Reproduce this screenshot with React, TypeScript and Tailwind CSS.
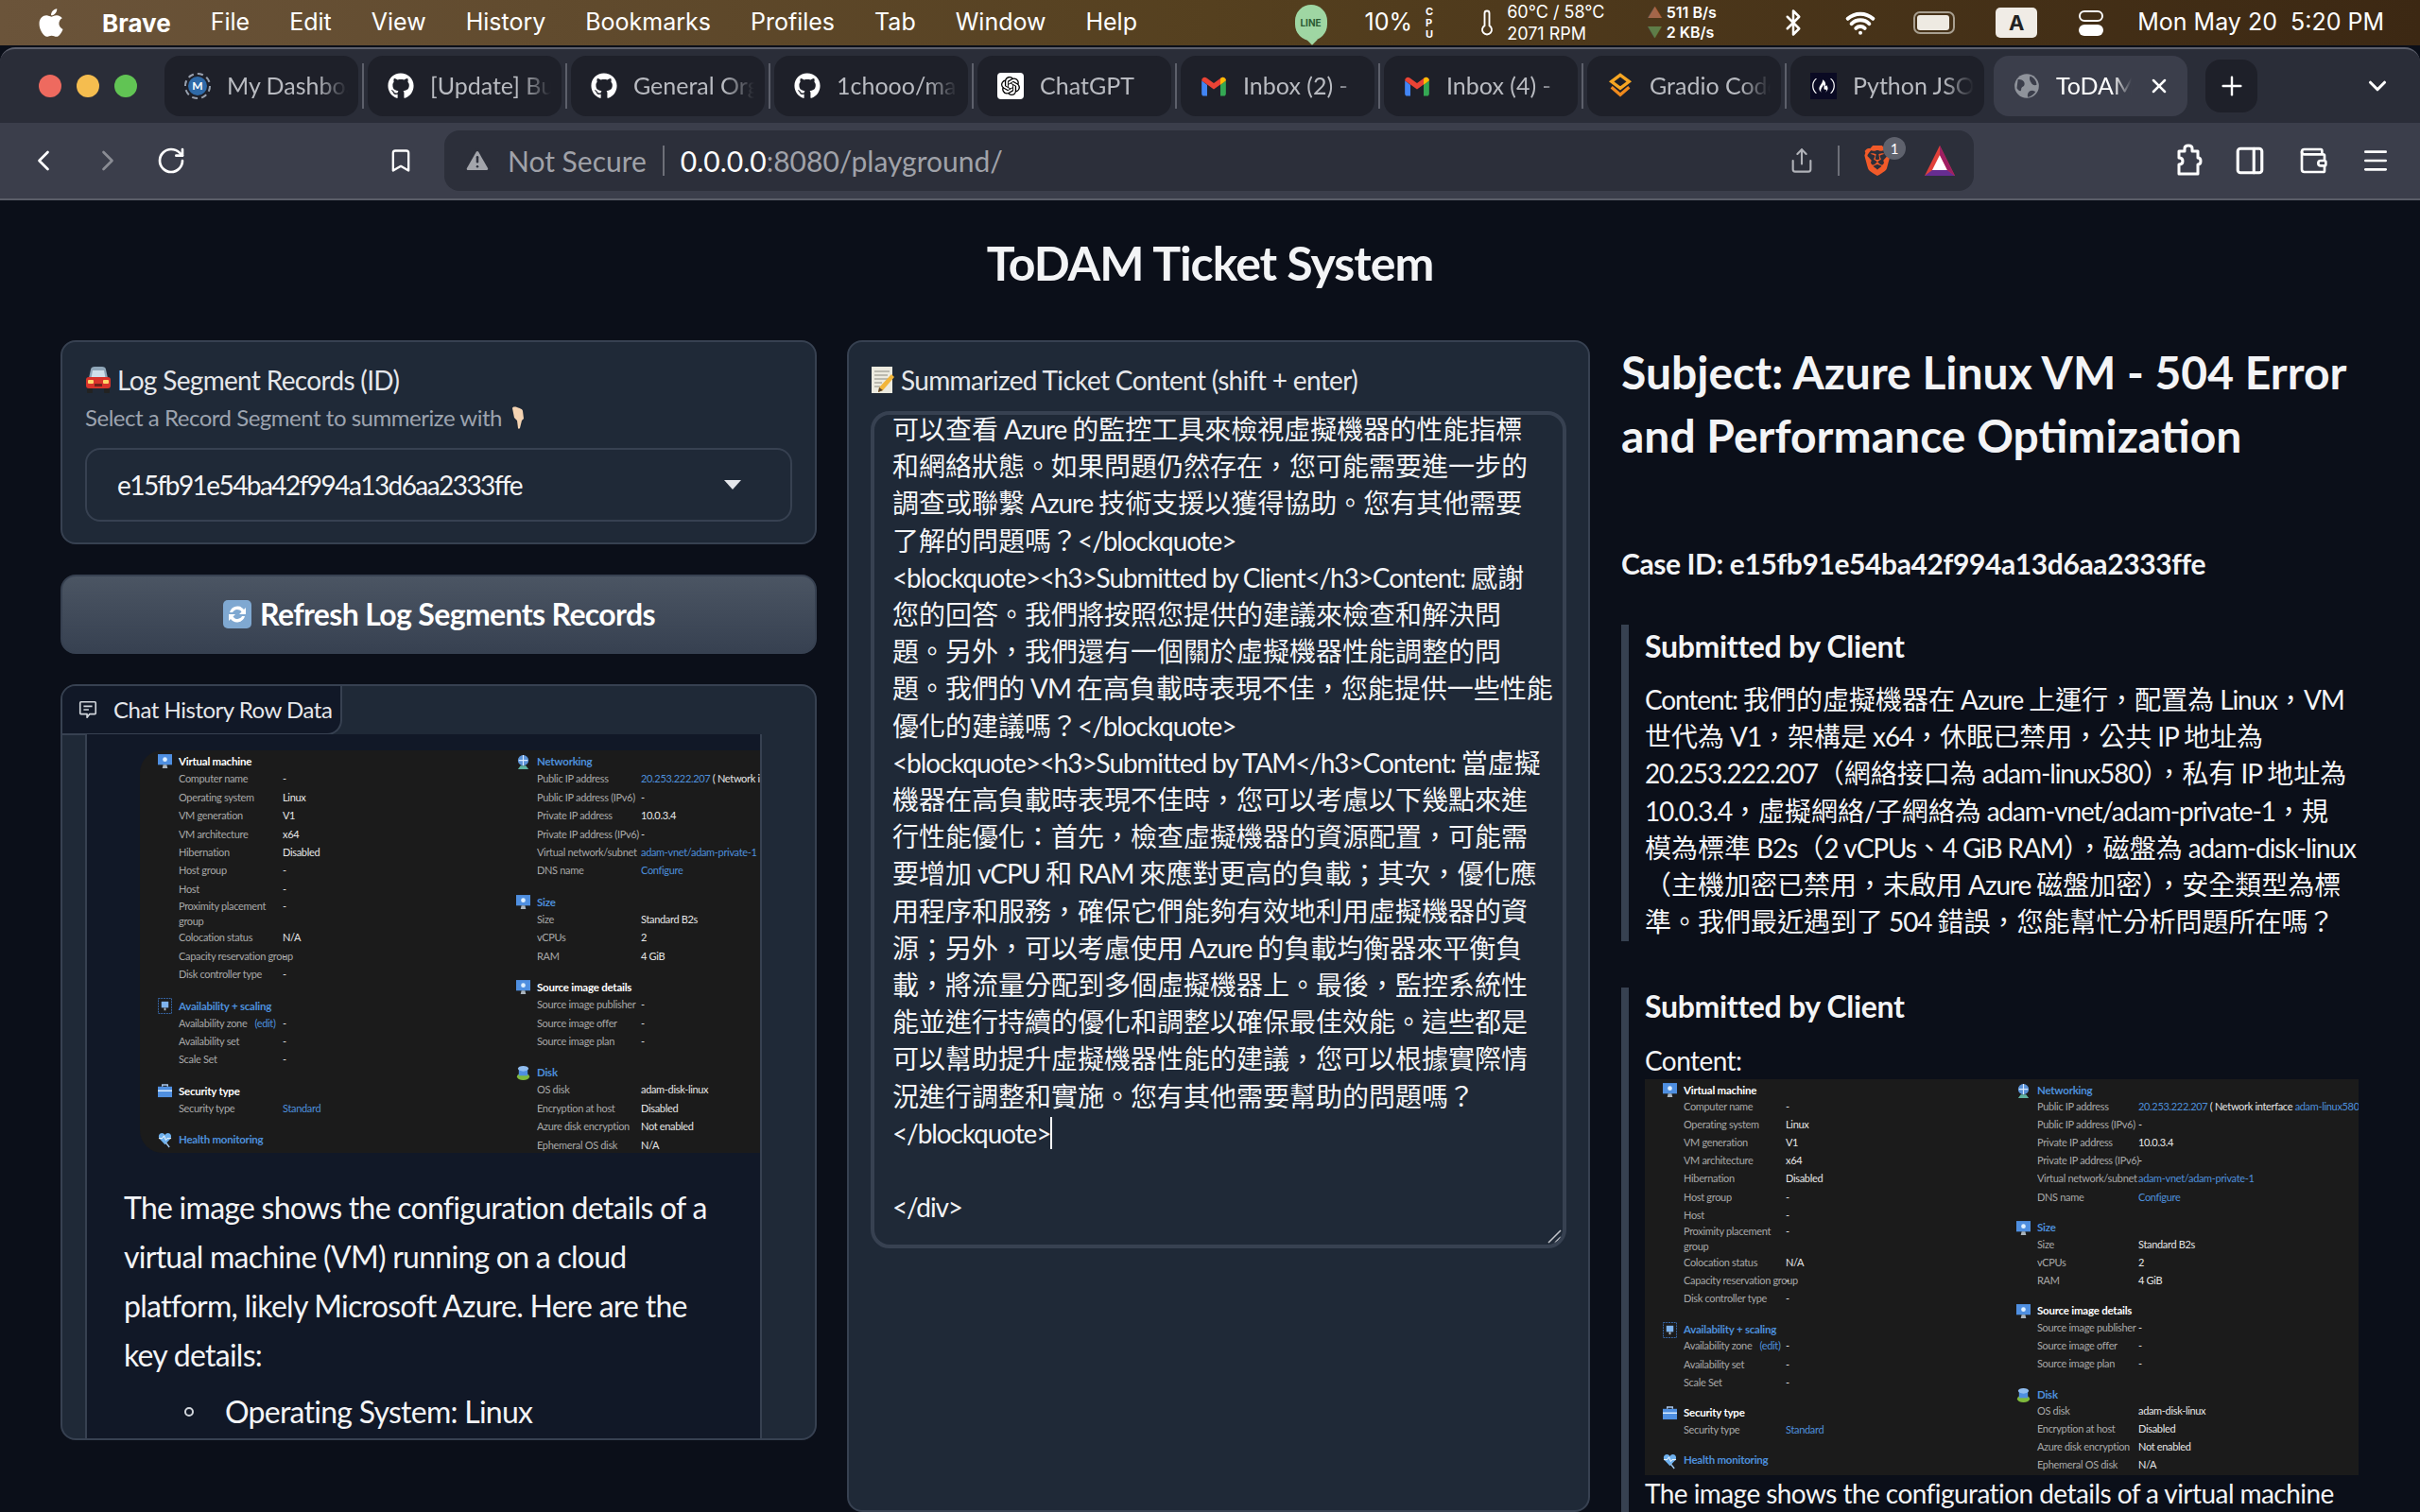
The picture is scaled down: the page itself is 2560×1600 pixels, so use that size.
import { Bluetooth, Bookmark, ChevronDown, ChevronLeft, ChevronRight, Menu, PanelRight, Plus, RotateCw, Share, Thermometer, TriangleAlert, Wallet, Wifi, X } from "lucide-react"
import { FaApple, FaFreeCodeCamp, FaGithub } from "react-icons/fa"
import { SiBrave, SiOpenai } from "react-icons/si"
import type { ReactNode } from "react"

const ui = "font-['Lato','Noto_Sans_CJK_TC',sans-serif]"

function GmailIcon() {
  return (
    <svg viewBox="0 0 24 18" className="w-7 h-6">
      <path d="M1 4v12c0 1 .6 2 2 2h3V8z" fill="#4285f4" />
      <path d="M18 8v10h3c1.4 0 2-1 2-2V4z" fill="#34a853" />
      <path d="M1 4l11 8 11-8c0-2.500-2.800-3.600-4.500-2.300L12 6.500 5.500 1.700C3.800.4 1 1.500 1 4z" fill="#ea4335" />
      <path d="M18 2.800V8l5-4c0-2.500-2.800-3.600-4.500-2.300z" fill="#fbbc04" />
    </svg>
  )
}

function GradioIcon() {
  return (
    <svg viewBox="0 0 24 24" className="w-7 h-7" fill="none" stroke="#f6a623" strokeWidth="2.800">
      <path d="M12 2l8 6-8 6-8-6z" />
      <path d="M4 13l8 7 8-7" stroke="#f08a1d" />
    </svg>
  )
}

function DashIcon() {
  return (
    <div className="w-7 h-7 rounded-full border-2 border-dashed border-gray-400 flex items-center justify-center">
      <div className="w-5 h-5 rounded-full bg-[#2f6aa8] text-white text-[12px] font-bold flex items-center justify-center">M</div>
    </div>
  )
}

function GlobeIcon() {
  return (
    <svg viewBox="0 0 24 24" className="w-7 h-7">
      <circle cx="12" cy="12" r="11" fill="#8f939b" />
      <path d="M4 6c3 0 6 1 6 4s-3 2-3 5-3 1-4-1zM15 3c3 1 6 4 6 8-2 1-4 0-5-2s-2-3-1-6zM13 22c-1-3 1-6 4-6 1 0 2 1 3 1-1 2-4 5-7 5z" fill="#3b3e4b" />
    </svg>
  )
}

function ExtensionIcon() {
  return (
    <svg viewBox="0 0 30 36" className="w-[30px] h-[36px] text-white" fill="none" stroke="currentColor" strokeWidth="3" strokeLinejoin="round">
      <path d="M4 8h6V5c0-4 8-4 8 0v3h6v7c4 0 4 7 0 7v10H4V22c3 0 4-2 4-3.500S7 15 4 15z" />
    </svg>
  )
}

const tabs: { title: string; icon: ReactNode; active?: boolean }[] = [
  { title: "My Dashboard", icon: <DashIcon /> },
  { title: "[Update] Bump", icon: <FaGithub className="w-7 h-7 text-white" /> },
  { title: "General Organi", icon: <FaGithub className="w-7 h-7 text-white" /> },
  { title: "1chooo/markdown", icon: <FaGithub className="w-7 h-7 text-white" /> },
  {
    title: "ChatGPT",
    icon: (
      <div className="w-7 h-7 rounded bg-white flex items-center justify-center">
        <SiOpenai className="w-5 h-5 text-black" />
      </div>
    ),
  },
  { title: "Inbox (2) -", icon: <GmailIcon /> },
  { title: "Inbox (4) -", icon: <GmailIcon /> },
  { title: "Gradio Code", icon: <GradioIcon /> },
  {
    title: "Python JSON",
    icon: (
      <div className="w-7 h-7 bg-[#0a0a23] flex items-center justify-center">
        <FaFreeCodeCamp className="w-6 h-6 text-white" />
      </div>
    ),
  },
  { title: "ToDAM Ticket", icon: <GlobeIcon />, active: true },
]

const menus = ["File", "Edit", "View", "History", "Bookmarks", "Profiles", "Tab", "Window", "Help"]

function MenuBar() {
  return (
    <header className="h-[48px] flex items-center bg-gradient-to-r from-[#6b543a] via-[#55401f] to-[#3c2813] text-white font-['Inter',sans-serif] text-[25px]">
      <FaApple className="w-[30px] h-[34px] ml-[39px] mr-[39px]" />
      <span className="font-bold text-[26px] mr-[42px]">Brave</span>
      <nav className="flex gap-[42px]">
        {menus.map((m) => (
          <span key={m}>{m}</span>
        ))}
      </nav>
      <div className="ml-auto flex items-center">
        <div className="relative w-[34px] h-[38px] rounded-full bg-[#9fd6a3] text-[#2c5a33] text-[10px] font-bold flex items-center justify-center mr-[40px]">
          LINE
          <span className="absolute bottom-[-3px] left-[14px] w-[8px] h-[8px] rotate-45 bg-[#9fd6a3]" />
        </div>
        <span className="text-[25px] mr-[14px]">10%</span>
        <span className="flex flex-col text-[11px] leading-[12px] font-bold mr-[42px]">
          <span>C</span>
          <span>P</span>
          <span>U</span>
        </span>
        <Thermometer className="w-[30px] h-[40px] mr-[6px]" strokeWidth={1.500} />
        <div className="flex flex-col text-[18px] leading-[23px] mr-[38px] w-[110px] whitespace-nowrap">
          <span>60°C / 58°C</span>
          <span>2071 RPM</span>
        </div>
        <div className="flex flex-col text-[16px] leading-[21px] font-semibold w-[80px] mr-[60px] whitespace-nowrap">
          <span><span className="text-[#a4664a] mr-[4px]">▲</span>511 B/s</span>
          <span><span className="text-[#5e7d48] mr-[4px]">▼</span>2 KB/s</span>
        </div>
        <Bluetooth className="w-[30px] h-[32px] mr-[38px]" />
        <Wifi className="w-[36px] h-[32px] mr-[38px]" strokeWidth={3} />
        <div className="w-[44px] h-[24px] rounded-[7px] border-2 border-[#a89f90] p-[2px] mr-[43px]">
          <div className="h-full w-[34px] rounded-[3px] bg-[#eeeae2]" />
        </div>
        <div className="w-[44px] h-[32px] rounded-[5px] bg-[#f0ece6] text-[#222] font-bold text-[22px] flex items-center justify-center mr-[44px]">A</div>
        <div className="flex flex-col gap-[3px] mr-[36px]">
          <div className="w-[26px] h-[12px] rounded-full border-2 border-white" />
          <div className="w-[26px] h-[12px] rounded-full bg-white" />
        </div>
        <span className="mr-[38px] whitespace-nowrap">Mon May 20&nbsp;&nbsp;5:20 PM</span>
      </div>
    </header>
  )
}

function TabStrip() {
  return (
    <div className="h-[80px] bg-[#2a2d38] flex items-center border-t-2 border-[#5c5f6b] rounded-t-[16px] mt-[2px]">
      <div className="flex gap-[16px] ml-[41px] mr-[29px]">
        <span className="w-[24px] h-[24px] rounded-full bg-[#ee6a5f]" />
        <span className="w-[24px] h-[24px] rounded-full bg-[#f5bd4f]" />
        <span className="w-[24px] h-[24px] rounded-full bg-[#61c454]" />
      </div>
      <div className="flex gap-[10px]">
        {tabs.map((t, i) => (
          <div key={t.title} className="relative">
            <div className={`w-[205px] h-[64px] rounded-[16px] flex items-center pl-[21px] gap-[17px] text-[25px] overflow-hidden whitespace-nowrap ${t.active ? "bg-[#3b3e4b] text-white" : "bg-[#1e2029] text-[#b9bbc1]"}`}>
              <span className="shrink-0">{t.icon}</span>
              <span className={`overflow-hidden ${t.active ? "w-[80px]" : "w-[128px]"} [mask-image:linear-gradient(to_right,black_75%,transparent)]`}>{t.title}</span>
              {t.active && <X className="w-[24px] h-[24px] text-white shrink-0" strokeWidth={2.500} />}
            </div>
            {i < 8 && <span className="absolute right-[-6px] top-[8px] w-[2px] h-[48px] bg-[#5d606b]" />}
          </div>
        ))}
      </div>
      <div className="ml-[19px] w-[55px] h-[56px] rounded-[16px] bg-[#1e2029] flex items-center justify-center">
        <Plus className="w-[32px] h-[32px] text-white" strokeWidth={1.800} />
      </div>
      <ChevronDown className="w-[30px] h-[30px] text-white ml-[112px]" strokeWidth={2.500} />
    </div>
  )
}

function Toolbar() {
  return (
    <div className="h-[82px] bg-[#3b3e4b] flex items-center border-b-2 border-[#5a5d68]">
      <ChevronLeft className="w-[36px] h-[40px] ml-[28px] text-white" strokeWidth={1.800} />
      <ChevronRight className="w-[36px] h-[40px] ml-[32px] text-[#8a8c94]" strokeWidth={1.800} />
      <RotateCw className="w-[32px] h-[32px] ml-[33px] text-white" strokeWidth={2} />
      <Bookmark className="w-[28px] h-[34px] ml-[213px] text-white" strokeWidth={2} />
      <div className="ml-[32px] w-[1618px] h-[64px] rounded-[16px] bg-[#2c2f3a] flex items-center text-[30px]">
        <TriangleAlert className="w-[30px] h-[30px] ml-[20px] text-[#a3a5ab]" fill="#a3a5ab" stroke="#2c2f3a" />
        <span className="ml-[17px] text-[#a0a2a9]">Not Secure</span>
        <span className="w-[2px] h-[32px] bg-[#6d6f78] mx-[17px]" />
        <span className="text-white">0.0.0.0</span>
        <span className="text-[#a0a2a9]">:8080/playground/</span>
        <Share className="w-[28px] h-[32px] ml-auto text-[#b0b2b8]" strokeWidth={1.800} />
        <span className="w-[2px] h-[32px] bg-[#6d6f78] ml-[24px] mr-[24px]" />
        <div className="relative">
          <SiBrave className="w-[32px] h-[38px] text-[#f15a29]" />
          <span className="absolute -top-[6px] -right-[14px] w-[24px] h-[24px] rounded-full bg-[#5f626d] text-white text-[15px] flex items-center justify-center">1</span>
        </div>
        <svg viewBox="0 0 36 36" className="w-[36px] h-[36px] ml-[32px] mr-[18px]">
          <path d="M18 2l16 32H2z" fill="#e0413a" />
          <path d="M2 34l8-6h16l8 6z" fill="#662d91" />
          <path d="M18 12l8 16H10z" fill="#ffffff" />
          <path d="M18 2l16 32-8-6-8-16z" fill="#9e1f63" />
        </svg>
      </div>
      <div className="ml-[213px]">
        <ExtensionIcon />
      </div>
      <PanelRight className="w-[34px] h-[34px] ml-[32px] text-white" strokeWidth={2.200} />
      <Wallet className="w-[32px] h-[32px] ml-[34px] text-white" strokeWidth={2} />
      <Menu className="w-[32px] h-[32px] ml-[34px] text-white" strokeWidth={2} />
    </div>
  )
}

function CarEmoji() {
  return (
    <svg viewBox="0 0 28 30" className="w-[28px] h-[30px] shrink-0">
      <path d="M6 4c0-2 2-3 4-3h8c2 0 4 1 4 3l2 9H4z" fill="#8fa6b8" />
      <path d="M8 5h12l1.500 8h-15z" fill="#cfe0ea" />
      <rect x="1" y="12" width="26" height="12" rx="3" fill="#d8332b" />
      <rect x="3" y="15" width="6" height="4" rx="1" fill="#ffd76a" />
      <rect x="19" y="15" width="6" height="4" rx="1" fill="#ffd76a" />
      <rect x="10" y="19" width="8" height="3" fill="#70201c" />
      <rect x="2" y="24" width="6" height="5" rx="1" fill="#222" />
      <rect x="20" y="24" width="6" height="5" rx="1" fill="#222" />
    </svg>
  )
}

function FingerEmoji() {
  return (
    <svg viewBox="0 0 18 24" className="w-[18px] h-[24px] shrink-0">
      <path d="M3 2c0-1 2-2 5-1s6 2 6 4l1 8-2 2-2 8c-.4 1-2 1-2 0l-1-8-3-3z" fill="#f5d4b3" />
    </svg>
  )
}

function RefreshEmoji() {
  return (
    <svg viewBox="0 0 32 32" className="w-[32px] h-[32px] shrink-0">
      <rect x="1" y="1" width="30" height="30" rx="5" fill="#7fa8d1" />
      <path d="M8 14a8.500 8.500 0 0 1 15-3l2-2v7h-7l2.500-2.500A5.500 5.500 0 0 0 11 14z" fill="#fff" />
      <path d="M24 18a8.500 8.500 0 0 1-15 3l-2 2v-7h7l-2.500 2.500A5.500 5.500 0 0 0 21 18z" fill="#fff" />
    </svg>
  )
}

function MemoEmoji() {
  return (
    <svg viewBox="0 0 26 30" className="w-[26px] h-[30px] shrink-0">
      <rect x="1" y="1" width="22" height="28" fill="#eceadf" />
      <path d="M4 6h16M4 10h14M4 14h16M4 18h8M4 22h6" stroke="#8a8a80" strokeWidth="1" />
      <path d="M22 9l3 3-12 14-5 2 1-5z" fill="#f2b53a" />
      <path d="M8 28l1-5 4 3z" fill="#5b4630" />
    </svg>
  )
}

function ChatBubbleIcon() {
  return (
    <svg viewBox="0 0 24 24" className="w-[22px] h-[22px] shrink-0 text-[#d1d5db]" fill="none" stroke="currentColor" strokeWidth="1.800" strokeLinejoin="round">
      <path d="M4 3h16a1 1 0 0 1 1 1v12a1 1 0 0 1-1 1h-6l-3 4v-4H4a1 1 0 0 1-1-1V4a1 1 0 0 1 1-1z" />
      <path d="M7 8h10M7 12h6" />
    </svg>
  )
}

type Row = { label: ReactNode; value?: ReactNode; tall?: boolean }
type Section = { title: string; blue?: boolean; icon: ReactNode; rows: Row[] }

const link = (s: string) => <span className="text-[#4d8fdc]">{s}</span>

function Monitor() {
  return (
    <svg viewBox="0 0 16 18" className="w-[15px] h-[17px]">
      <rect x="0" y="0" width="16" height="12" fill="#4f8fe0" />
      <circle cx="8" cy="6" r="2.500" fill="#dff0ff" />
      <path d="M5 16h6l-1-4H6z" fill="#aab4bd" />
    </svg>
  )
}

const leftSections: Section[] = [
  {
    title: "Virtual machine",
    icon: <Monitor />,
    rows: [
      { label: "Computer name", value: "-" },
      { label: "Operating system", value: "Linux" },
      { label: "VM generation", value: "V1" },
      { label: "VM architecture", value: "x64" },
      { label: "Hibernation", value: "Disabled" },
      { label: "Host group", value: "-" },
      { label: "Host", value: "-" },
      { label: <>Proximity placement<br />group</>, value: "-", tall: true },
      { label: "Colocation status", value: "N/A" },
      { label: "Capacity reservation group", value: "-" },
      { label: "Disk controller type", value: "-" },
    ],
  },
  {
    title: "Availability + scaling",
    blue: true,
    icon: (
      <svg viewBox="0 0 16 18" className="w-[15px] h-[17px]">
        <rect x=".5" y=".5" width="15" height="17" fill="none" stroke="#3b6fb5" strokeDasharray="2 1" />
        <rect x="4" y="4" width="8" height="7" fill="#7fb4ee" />
        <path d="M7 11h2v3H7z" fill="#aab4bd" />
      </svg>
    ),
    rows: [
      { label: <>Availability zone<span className="ml-[8px] text-[#4d8fdc]">(edit)</span></>, value: "-" },
      { label: "Availability set", value: "-" },
      { label: "Scale Set", value: "-" },
    ],
  },
  {
    title: "Security type",
    icon: (
      <svg viewBox="0 0 16 16" className="w-[15px] h-[15px]">
        <rect x="0" y="3" width="16" height="12" fill="#4f8fe0" />
        <path d="M5 3V1h6v2" fill="none" stroke="#a9c8ee" strokeWidth="1.500" />
        <rect x="0" y="7" width="16" height="1.500" fill="#dff0ff" />
      </svg>
    ),
    rows: [{ label: "Security type", value: link("Standard") }],
  },
  {
    title: "Health monitoring",
    blue: true,
    icon: (
      <svg viewBox="0 0 16 18" className="w-[15px] h-[17px]">
        <path d="M8 14L1.500 7C0 4 2 1 4.500 1 6 1 7.300 2 8 3c.7-1 2-2 3.500-2C14 1 16 4 14.500 7z" fill="#6fb1ee" />
        <path d="M1 7h4l2-3 2 5 1.500-2H15" fill="none" stroke="#fff" strokeWidth="1" />
        <path d="M9 12l4 5" stroke="#9fc8f0" strokeWidth="1.500" />
      </svg>
    ),
    rows: [],
  },
]

const rightSections: Section[] = [
  {
    title: "Networking",
    blue: true,
    icon: (
      <svg viewBox="0 0 16 18" className="w-[15px] h-[17px]">
        <circle cx="8" cy="7" r="6" fill="#5b93d8" />
        <path d="M3 7h10M8 1v12" stroke="#dbeafe" strokeWidth="1.200" />
        <path d="M2 17l3-4h6l3 4z" fill="#5fb3a0" />
      </svg>
    ),
    rows: [
      {
        label: "Public IP address",
        value: (
          <>
            {link("20.253.222.207")} ( Network interface {link("adam-linux580")} )
          </>
        ),
      },
      { label: "Public IP address (IPv6)", value: "-" },
      { label: "Private IP address", value: "10.0.3.4" },
      { label: "Private IP address (IPv6)", value: "-" },
      { label: "Virtual network/subnet", value: link("adam-vnet/adam-private-1") },
      { label: "DNS name", value: link("Configure") },
    ],
  },
  {
    title: "Size",
    blue: true,
    icon: <Monitor />,
    rows: [
      { label: "Size", value: "Standard B2s" },
      { label: "vCPUs", value: "2" },
      { label: "RAM", value: "4 GiB" },
    ],
  },
  {
    title: "Source image details",
    icon: <Monitor />,
    rows: [
      { label: "Source image publisher", value: "-" },
      { label: "Source image offer", value: "-" },
      { label: "Source image plan", value: "-" },
    ],
  },
  {
    title: "Disk",
    blue: true,
    icon: (
      <svg viewBox="0 0 16 18" className="w-[15px] h-[17px]">
        <ellipse cx="8" cy="13" rx="7" ry="4" fill="#7fba3c" />
        <rect x="3" y="4" width="10" height="8" fill="#4f8fe0" />
        <ellipse cx="8" cy="4" rx="6" ry="3" fill="#8fbcef" />
      </svg>
    ),
    rows: [
      { label: "OS disk", value: "adam-disk-linux" },
      { label: "Encryption at host", value: "Disabled" },
      { label: "Azure disk encryption", value: "Not enabled" },
      { label: "Ephemeral OS disk", value: "N/A" },
    ],
  },
]

function AzureColumn({ sections, tight, labelW }: { sections: Section[]; tight: boolean; labelW: string }) {
  const rowH = tight ? "h-[19.1px]" : "h-[19.45px]"
  const tallH = tight ? "h-[31.500px]" : "h-[32px]"
  const headH = tight ? "h-[16.500px]" : "h-[17.500px]"
  return (
    <div className="flex flex-col">
      {sections.map((s, i) => (
        <section key={s.title} className={i > 0 ? "mt-[14.500px]" : ""}>
          <div className={`relative ${headH} flex items-center`}>
            <span className="absolute -left-[22px] top-[1px]">{s.icon}</span>
            <span className={`font-bold text-[11.500px] tracking-[-0.02em] ${s.blue ? "text-[#4d8fdc]" : "text-white"}`}>{s.title}</span>
          </div>
          {s.rows.map((r, j) => (
            <div key={j} className={`flex tracking-[-0.03em] ${r.tall ? tallH + " items-start" : rowH + " items-center"}`}>
              <span className={`${labelW} shrink-0 text-[#a8a8a8] leading-[16px] whitespace-nowrap`}>{r.label}</span>
              <span className="text-[#e6e6e6] whitespace-nowrap leading-[16px]">{r.value}</span>
            </div>
          ))}
        </section>
      ))}
    </div>
  )
}

function AzureShot({ className, tight }: { className: string; tight: boolean }) {
  return (
    <div className={`bg-[#1b1b1b] overflow-hidden text-[11px] pt-[3px] ${className}`}>
      <div className="flex pl-[41px]">
        <div className={tight ? "w-[374px] shrink-0" : "w-[379px] shrink-0"}>
          <AzureColumn sections={leftSections} tight={tight} labelW={tight ? "w-[108px]" : "w-[110px]"} />
        </div>
        <div className="shrink-0">
          <AzureColumn sections={rightSections} tight={tight} labelW={tight ? "w-[107px]" : "w-[110px]"} />
        </div>
      </div>
    </div>
  )
}

// Lato runs wider than the original's Latin face, CJK should stay on its em grid
function Mixed({ text }: { text: string }) {
  return (
    <>
      {text.split(/([\x00-\x7f]+)/).map((part, i) =>
        i % 2 === 1 ? (
          <span key={i} className="tracking-[-0.04em]">
            {part}
          </span>
        ) : (
          part
        ),
      )}
    </>
  )
}

const ticketLines = [
  "可以查看 Azure 的監控工具來檢視虛擬機器的性能指標",
  "和網絡狀態。如果問題仍然存在，您可能需要進一步的",
  "調查或聯繫 Azure 技術支援以獲得協助。您有其他需要",
  "了解的問題嗎？</blockquote>",
  "<blockquote><h3>Submitted by Client</h3>Content: 感謝",
  "您的回答。我們將按照您提供的建議來檢查和解決問",
  "題。另外，我們還有一個關於虛擬機器性能調整的問",
  "題。我們的 VM 在高負載時表現不佳，您能提供一些性能",
  "優化的建議嗎？</blockquote>",
  "<blockquote><h3>Submitted by TAM</h3>Content: 當虛擬",
  "機器在高負載時表現不佳時，您可以考慮以下幾點來進",
  "行性能優化：首先，檢查虛擬機器的資源配置，可能需",
  "要增加 vCPU 和 RAM 來應對更高的負載；其次，優化應",
  "用程序和服務，確保它們能夠有效地利用虛擬機器的資",
  "源；另外，可以考慮使用 Azure 的負載均衡器來平衡負",
  "載，將流量分配到多個虛擬機器上。最後，監控系統性",
  "能並進行持續的優化和調整以確保最佳效能。這些都是",
  "可以幫助提升虛擬機器性能的建議，您可以根據實際情",
  "況進行調整和實施。您有其他需要幫助的問題嗎？",
]

const clientLines = [
  "Content: 我們的虛擬機器在 Azure 上運行，配置為 Linux，VM",
  "世代為 V1，架構是 x64，休眠已禁用，公共 IP 地址為",
  "20.253.222.207（網絡接口為 adam-linux580），私有 IP 地址為",
  "10.0.3.4，虛擬網絡/子網絡為 adam-vnet/adam-private-1，規",
  "模為標準 B2s（2 vCPUs、4 GiB RAM），磁盤為 adam-disk-linux",
  "（主機加密已禁用，未啟用 Azure 磁盤加密），安全類型為標",
  "準。我們最近遇到了 504 錯誤，您能幫忙分析問題所在嗎？",
]

function LeftColumn() {
  return (
    <div className="w-[800px] shrink-0 flex flex-col gap-[32px]">
      <div className="h-[216px] rounded-[16px] border-2 border-[#374151] bg-[#1f2937] px-[24px] pt-[22px]">
        <div className="flex items-center gap-[6px] h-[36px] text-[28px] tracking-[-0.024em] text-[#e5e7eb]">
          <CarEmoji />
          <span>Log Segment Records (ID)</span>
        </div>
        <div className="flex items-center gap-[8px] h-[34px] mt-[5px] text-[24px] tracking-[-0.02em] text-[#9ca3af]">
          <span>Select a Record Segment to summerize with</span>
          <FingerEmoji />
        </div>
        <div className="h-[78px] mt-[15px] rounded-[16px] border-2 border-[#374151] flex items-center pl-[32px] pr-[52px] text-[28px] text-[#f3f4f6]">
          <span className="tracking-[-0.056em]">e15fb91e54ba42f994a13d6aa2333ffe</span>
          <span className="ml-auto w-0 h-0 border-x-[9px] border-x-transparent border-t-[10px] border-t-[#e5e7eb]" />
        </div>
      </div>
      <button className="h-[84px] rounded-[16px] border-2 border-[#374151] bg-gradient-to-b from-[#4b5563] to-[#374151] flex items-center justify-center gap-[8px] text-[32px] tracking-[-0.02em] font-bold text-white">
        <RefreshEmoji />
        <span>Refresh Log Segments Records</span>
      </button>
      <div className="h-[800px] rounded-[16px] border-2 border-[#374151] bg-[#1f2937] overflow-hidden flex flex-col">
        <div className="h-[52px] w-[296px] shrink-0 flex items-center gap-[16px] pl-[16px] bg-[#111827] border-r-2 border-b-2 border-[#374151] rounded-br-[16px] text-[24px] tracking-[-0.02em] whitespace-nowrap text-[#e5e7eb]">
          <ChatBubbleIcon />
          <span>Chat History Row Data</span>
        </div>
        <div className="ml-[24px] w-[716px] flex-1 bg-[#111827] border-x-2 border-[#374151] pt-[17px] overflow-hidden -mt-px">
          <AzureShot className="ml-[56px] h-[426px] rounded-l-[24px]" tight={false} />
          <div className="pl-[39px] mt-[32px] text-[32px] leading-[52px] tracking-[-0.023em] text-[#f3f4f6] whitespace-nowrap">
            <p>The image shows the configuration details of a</p>
            <p>virtual machine (VM) running on a cloud</p>
            <p>platform, likely Microsoft Azure. Here are the</p>
            <p>key details:</p>
            <ul className="mt-[8px] pl-[64px]">
              <li className="flex items-center gap-[33px]">
                <span className="w-[10px] h-[10px] rounded-full border-2 border-[#d1d5db]" />
                Operating System: Linux
              </li>
            </ul>
          </div>
        </div>
      </div>
    </div>
  )
}

function MiddleColumn() {
  return (
    <div className="w-[786px] shrink-0 h-[1240px] rounded-[16px] border-2 border-[#374151] bg-[#1f2937] px-[23px] pt-[22px]">
      <div className="flex items-center gap-[6px] h-[36px] text-[28px] tracking-[-0.023em] text-[#e5e7eb]">
        <MemoEmoji />
        <span>Summarized Ticket Content (shift + enter)</span>
      </div>
      <div className="relative mt-[15px] h-[886px] rounded-[20px] border-4 border-[#374151] overflow-hidden pl-[19px] text-[28px] leading-[39.200px] text-[#f3f4f6] whitespace-nowrap">
        <div className="-mt-[4px]">
          {ticketLines.map((l) => (
            <div key={l}>
              <Mixed text={l} />
            </div>
          ))}
          <div className="flex items-center">
            <span className="tracking-[-0.04em]">&lt;/blockquote&gt;</span>
            <span className="w-[2px] h-[34px] bg-white" />
          </div>
          <div className="h-[39.200px]" />
          <div className="tracking-[-0.04em]">&lt;/div&gt;</div>
        </div>
        <svg viewBox="0 0 16 16" className="absolute right-[1px] bottom-[1px] w-[16px] h-[16px] text-[#c4c7cc]" stroke="currentColor" strokeWidth="1.500">
          <path d="M2 15L15 2M9 15l6-6" />
        </svg>
      </div>
    </div>
  )
}

function RightColumn() {
  return (
    <div className="flex-1 text-[#f3f4f6] overflow-hidden">
      <h1 className="text-[48px] leading-[67px] font-bold">
        Subject: Azure Linux VM - 504 Error
        <br />
        and Performance Optimization
      </h1>
      <h2 className="text-[30px] leading-[40px] tracking-[-0.013em] font-bold mt-[82px]">Case ID: e15fb91e54ba42f994a13d6aa2333ffe</h2>
      <blockquote className="mt-[45px] border-l-8 border-[#374151] pl-[17px] h-[335px] pt-[3px]">
        <h3 className="text-[32px] leading-[40px] tracking-[-0.01em] font-bold">Submitted by Client</h3>
        <div className="mt-[17px] text-[28px] leading-[39.200px] whitespace-nowrap">
          {clientLines.map((l) => (
            <div key={l}>
              <Mixed text={l} />
            </div>
          ))}
        </div>
      </blockquote>
      <blockquote className="mt-[49px] border-l-8 border-[#374151] pl-[17px]">
        <h3 className="text-[32px] leading-[40px] tracking-[-0.01em] font-bold">Submitted by Client</h3>
        <p className="mt-[18px] text-[28px] leading-[39px] tracking-[-0.02em]">Content:</p>
        <AzureShot className="w-[755px] h-[419px]" tight={true} />
        <p className="text-[28px] leading-[39px] tracking-[-0.02em] whitespace-nowrap">The image shows the configuration details of a virtual machine</p>
      </blockquote>
    </div>
  )
}

export default function App() {
  return (
    <div className={`w-[2560px] h-[1600px] overflow-hidden bg-[#0b0f19] ${ui}`}>
      <MenuBar />
      <TabStrip />
      <Toolbar />
      <main className="relative">
        <h1 className="h-[148px] flex items-start justify-center pt-[34px] text-[50px] leading-[64px] tracking-[-0.02em] font-bold text-[#f3f4f6]">ToDAM Ticket System</h1>
        <div className="flex pl-[64px] pr-[30px]">
          <LeftColumn />
          <div className="w-[32px] shrink-0" />
          <MiddleColumn />
          <div className="w-[33px] shrink-0" />
          <RightColumn />
        </div>
      </main>
    </div>
  )
}
